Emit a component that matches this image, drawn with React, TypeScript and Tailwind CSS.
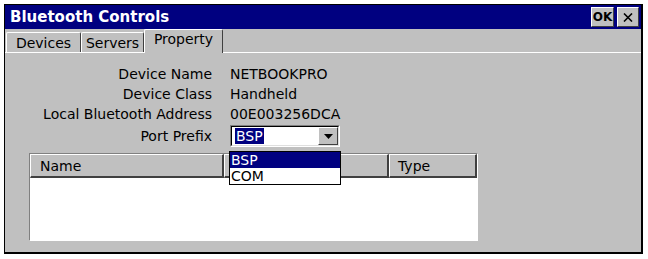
import React from 'react';

const raised =
  'border border-t-white border-l-white border-r-[#404040] border-b-[#404040] bg-[#c0c0c0]';

const rows: [string, string][] = [
  ['Device Name', 'NETBOOKPRO'],
  ['Device Class', 'Handheld'],
  ['Local Bluetooth Address', '00E003256DCA'],
];

function Tab({ label, width, active }: { label: string; width: string; active?: boolean }) {
  if (active) {
    return (
      <div
        className={`relative z-10 -mb-px flex h-[24px] ${width} items-start justify-center rounded-t-[2px] border-l border-t border-r border-l-white border-t-white border-r-[#404040] bg-[#c0c0c0] pt-[2px]`}
      >
        {label}
      </div>
    );
  }
  return (
    <div
      className={`flex h-[20px] ${width} items-center justify-center rounded-t-[2px] border-l border-t border-r border-l-white border-t-white border-r-[#404040] bg-[#c0c0c0]`}
    >
      {label}
    </div>
  );
}

export default function App() {
  return (
    <div className="h-[259px] w-[648px] bg-white pl-[4px] pt-[4px] font-['DejaVu_Sans',sans-serif] text-[14px] leading-none text-black">
      <div className="relative flex h-[250px] w-[639px] flex-col border-b-2 border-l border-r-2 border-t border-black bg-[#c0c0c0]">
        {/* title bar */}
        <div className="flex h-[24px] items-center bg-[#000080] pl-[5px] pr-[2px]">
          <span className="text-[15px] font-bold text-white">Bluetooth Controls</span>
          <div className="ml-auto flex gap-[3px]">
            <div className={`flex h-[20px] w-[23px] items-center justify-center text-[12px] font-bold ${raised}`}>
              OK
            </div>
            <div className={`flex h-[20px] w-[22px] items-center justify-center ${raised}`}>
              <svg width="10" height="9" viewBox="0 0 10 9">
                <path d="M1 0.5 L9 8.5 M9 0.5 L1 8.5" stroke="#000" strokeWidth="1.6" />
              </svg>
            </div>
          </div>
        </div>

        {/* tabs */}
        <div className="flex h-[24px] items-end border-b border-white pl-[1px]">
          <Tab label="Devices" width="w-[75px]" />
          <Tab label="Servers" width="w-[63px]" />
          <Tab label="Property" width="w-[79px]" active />
        </div>

        {/* property page */}
        <div className="flex flex-col pt-[11px]">
          <div className="grid grid-cols-[207px_1fr] gap-x-[18px]">
            {rows.map(([label, value]) => (
              <React.Fragment key={label}>
                <div className="flex h-[20px] items-center justify-end">{label}</div>
                <div className="flex h-[20px] items-center">{value}</div>
              </React.Fragment>
            ))}
            <div className="mt-[1px] flex h-[22px] items-center justify-end">Port Prefix</div>
            <div className="mt-[1px] flex h-[22px] w-[110px] border border-b-white border-l-[#808080] border-r-white border-t-[#808080]">
              <div className="flex flex-1 items-center border border-b-[#dfdfdf] border-l-black border-r-[#dfdfdf] border-t-black bg-white pl-[3px]">
                <span className="bg-[#000080] px-[1px] py-[1px] text-white">BSP</span>
                <div className={`ml-auto flex h-full w-[20px] items-center justify-center ${raised}`}>
                  <svg width="9" height="5" viewBox="0 0 9 5">
                    <path d="M0 0 H9 L4.5 5 Z" fill="#000" />
                  </svg>
                </div>
              </div>
            </div>
          </div>

          {/* list view */}
          <div className="ml-[24px] mt-[6px] flex h-[88px] w-[449px] flex-col border border-b-white border-l-[#808080] border-r-white border-t-[#808080]">
            <div className="flex h-[24px]">
              <div className="flex w-[194px] items-center border-b-2 border-r-2 border-b-[#404040] border-r-[#404040] border-l border-t border-l-white border-t-white pl-[9px]">
                Name
              </div>
              <div className="flex w-[165px] items-center border-b-2 border-r-2 border-b-[#404040] border-r-[#404040] border-l border-t border-l-white border-t-white pl-[8px]" />
              <div className="flex flex-1 items-center border-b-2 border-r-2 border-b-[#404040] border-r-[#404040] border-l border-t border-l-white border-t-white pl-[8px]">
                Type
              </div>
            </div>
            <div className="flex-1 bg-white" />
          </div>
        </div>

        {/* open drop-down list */}
        <div className="absolute left-[224px] top-[146px] flex w-[112px] flex-col border border-black bg-white">
          <div className="flex h-[16px] items-center bg-[#000080] pl-[1px] text-white">BSP</div>
          <div className="flex h-[16px] items-center pl-[1px]">COM</div>
        </div>
      </div>
    </div>
  );
}
